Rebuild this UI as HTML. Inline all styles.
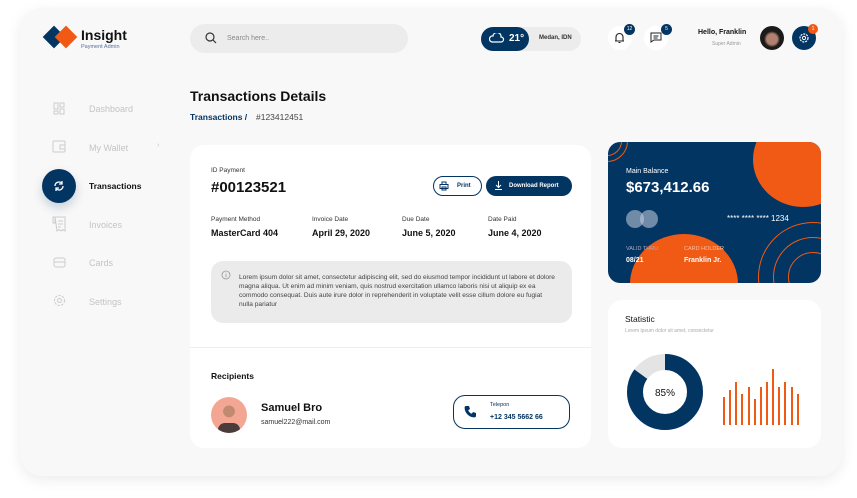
<!DOCTYPE html>
<html><head><meta charset="utf-8"><style>
*{margin:0;padding:0;box-sizing:border-box}
body{width:857px;height:498px;background:#fff;font-family:"Liberation Sans",sans-serif;position:relative;overflow:hidden;color:#111}
.a{position:absolute}
.frame{left:20px;top:8px;width:822px;height:468px;background:#f8f8f8;border-radius:22px;box-shadow:0 4px 14px rgba(0,0,0,.08)}
.navy{background:#033563}
.card{background:#fff;border-radius:14px}
.nav{font-size:9px;color:#c4c4c4}
.lbl{font-size:6.5px;color:#333}
.val{font-size:9px;font-weight:bold;color:#111}
</style></head><body>
<div class="a frame"></div>
<!-- logo -->
<div class="a navy" style="left:46px;top:29px;width:16px;height:16px;transform:rotate(45deg)"></div>
<div class="a" style="left:58px;top:29px;width:16px;height:16px;transform:rotate(45deg);background:#f05a14"></div>
<div class="a" style="left:81px;top:27px;font-size:14px;font-weight:bold">Insight</div>
<div class="a" style="left:81px;top:44px;font-size:5.5px;color:#5670a0">Payment Admin</div>
<!-- search -->
<div class="a" style="left:190px;top:24px;width:218px;height:29px;border-radius:15px;background:#ececec"></div>
<svg class="a" style="left:205px;top:32px" width="12" height="12" viewBox="0 0 12 12"><circle cx="5" cy="5" r="4" fill="none" stroke="#333" stroke-width="1.2"/><path d="M8 8l3 3" stroke="#333" stroke-width="1.2"/></svg>
<div class="a" style="left:227px;top:35px;font-size:7px;color:#888">Search here..</div>
<!-- weather -->
<div class="a" style="left:481px;top:27px;width:100px;height:24px;border-radius:12px;background:#ececec"></div>
<div class="a navy" style="left:481px;top:27px;width:48px;height:24px;border-radius:12px"></div>
<svg class="a" style="left:489px;top:33px" width="16" height="11" viewBox="0 0 16 11"><path d="M3 9a3 3 0 0 1 1-6a4 4 0 0 1 8 1a2.5 2.5 0 0 1 0 5z" fill="none" stroke="#fff" stroke-width="1.2"/></svg>
<div class="a" style="left:509px;top:33px;font-size:10px;font-weight:bold;color:#fff">21°</div>
<div class="a" style="left:539px;top:35px;font-size:6px;font-weight:bold;color:#333">Medan, IDN</div>
<!-- bell/chat -->
<div class="a" style="left:608px;top:26px;width:24px;height:24px;border-radius:12px;background:#fff"></div>
<svg class="a" style="left:613px;top:31px" width="13" height="13" viewBox="0 0 13 13"><path d="M3 10V6a3.5 3.5 0 0 1 7 0v4zM2 10h9M5.5 11.5h2" fill="none" stroke="#222" stroke-width="1.1"/></svg>
<div class="a navy" style="left:624px;top:24px;width:11px;height:11px;border-radius:6px;color:#fff;font-size:5px;text-align:center;line-height:11px">12</div>
<div class="a" style="left:644px;top:26px;width:24px;height:24px;border-radius:12px;background:#fff"></div>
<svg class="a" style="left:650px;top:32px" width="12" height="11" viewBox="0 0 12 11"><path d="M1 1h10v7H4l-3 2z M3.5 4h5M3.5 6h4" fill="none" stroke="#222" stroke-width="1"/></svg>
<div class="a navy" style="left:661px;top:24px;width:11px;height:11px;border-radius:6px;color:#fff;font-size:5px;text-align:center;line-height:11px">5</div>
<div class="a" style="left:698px;top:29px;font-size:7px;font-weight:bold">Hello, Franklin</div>
<div class="a" style="left:712px;top:41px;font-size:5px;color:#999">Super Admin</div>
<div class="a" style="left:760px;top:26px;width:24px;height:24px;border-radius:12px;background:radial-gradient(circle at 50% 55%,#b08070 0 30%,#1a1a1a 45%)"></div>
<div class="a navy" style="left:792px;top:26px;width:24px;height:24px;border-radius:12px"></div>
<svg class="a" style="left:798px;top:32px" width="12" height="12" viewBox="0 0 12 12"><circle cx="6" cy="6" r="4" fill="none" stroke="#fff" stroke-width="1.2" stroke-dasharray="2 1"/><circle cx="6" cy="6" r="1.6" fill="none" stroke="#fff"/></svg>
<div class="a" style="left:808px;top:24px;width:10px;height:10px;border-radius:5px;background:#f05a14;color:#fff;font-size:5px;text-align:center;line-height:10px">1</div>
<!-- sidebar -->
<svg class="a" style="left:53px;top:102px" width="13" height="13" viewBox="0 0 13 13" fill="none" stroke="#ccc"><rect x="1" y="1" width="4" height="6"/><rect x="1" y="9" width="4" height="3"/><rect x="7" y="1" width="4" height="4"/><rect x="7" y="7" width="4" height="5"/></svg>
<div class="a nav" style="left:89px;top:104px">Dashboard</div>
<svg class="a" style="left:52px;top:140px" width="15" height="13" viewBox="0 0 15 13" fill="none" stroke="#ccc"><rect x="1" y="1" width="12" height="11" rx="1"/><rect x="8" y="5" width="5" height="4"/></svg>
<div class="a nav" style="left:89px;top:143px">My Wallet</div>
<div class="a nav" style="left:157px;top:142px;font-size:7px">›</div>
<div class="a navy" style="left:42px;top:169px;width:34px;height:34px;border-radius:17px;box-shadow:0 5px 10px rgba(3,53,99,.2)"></div>
<svg class="a" style="left:53px;top:180px" width="12" height="12" viewBox="0 0 12 12" fill="none" stroke="#fff" stroke-width="1.3"><path d="M2 6a4 4 0 0 1 7-2.6M10 6a4 4 0 0 1-7 2.6M9 1v3H6M3 11V8h3"/></svg>
<div class="a" style="left:89px;top:181px;font-size:8.5px;font-weight:bold">Transactions</div>
<svg class="a" style="left:52px;top:216px" width="15" height="16" viewBox="0 0 15 16" fill="none" stroke="#ccc"><path d="M3 1h10v14l-2-1.5-2 1.5-2-1.5-2 1.5zM1 1h2v6H1zM6 5h5M6 8h5M6 11h3"/></svg>
<div class="a nav" style="left:89px;top:220px">Invoices</div>
<svg class="a" style="left:53px;top:257px" width="13" height="11" viewBox="0 0 13 11" fill="none" stroke="#ccc"><rect x="1" y="1" width="11" height="9" rx="2"/><path d="M1 5h11"/></svg>
<div class="a nav" style="left:89px;top:258px">Cards</div>
<svg class="a" style="left:53px;top:294px" width="13" height="13" viewBox="0 0 13 13" fill="none" stroke="#ccc"><circle cx="6.5" cy="6.5" r="5" stroke-dasharray="2.5 1.2"/><circle cx="6.5" cy="6.5" r="2"/></svg>
<div class="a nav" style="left:89px;top:297px">Settings</div>
<!-- title -->
<div class="a" style="left:190px;top:88px;font-size:14px;font-weight:bold">Transactions Details</div>
<div class="a" style="left:190px;top:112px;font-size:8.5px;font-weight:bold;color:#033563">Transactions /</div>
<div class="a" style="left:256px;top:112px;font-size:8.5px;color:#444">#123412451</div>
<!-- main card -->
<div class="a card" style="left:190px;top:145px;width:401px;height:303px"></div>
<div class="a" style="left:190px;top:347px;width:401px;height:1px;background:#eee"></div>
<div class="a lbl" style="left:211px;top:167px">ID Payment</div>
<div class="a" style="left:211px;top:179px;font-size:15px;font-weight:bold">#00123521</div>
<div class="a" style="left:433px;top:176px;width:49px;height:20px;border:1px solid #033563;border-radius:10px;font-size:6px;font-weight:bold;color:#033563;padding:6px 0 0 23px;line-height:7px">Print</div>
<svg class="a" style="left:439px;top:181px" width="10" height="10" viewBox="0 0 10 10" fill="none" stroke="#033563"><rect x="1" y="3.5" width="8" height="4"/><rect x="3" y="1" width="4" height="2.5"/><rect x="3" y="6" width="4" height="3"/></svg>
<div class="a navy" style="left:486px;top:176px;width:86px;height:20px;border-radius:10px;color:#fff;font-size:6px;font-weight:bold;padding:6.5px 0 0 23px;line-height:7px">Download Report</div>
<svg class="a" style="left:494px;top:181px" width="9" height="9" viewBox="0 0 9 9" fill="none" stroke="#fff"><path d="M4.5 0v6M2 4l2.5 2.5L7 4M1 8.5h7"/></svg>
<div class="a lbl" style="left:211px;top:216px">Payment Method</div><div class="a val" style="left:211px;top:228px">MasterCard 404</div>
<div class="a lbl" style="left:312px;top:216px">Invoice Date</div><div class="a val" style="left:312px;top:228px">April 29, 2020</div>
<div class="a lbl" style="left:402px;top:216px">Due Date</div><div class="a val" style="left:402px;top:228px">June 5, 2020</div>
<div class="a lbl" style="left:488px;top:216px">Date Paid</div><div class="a val" style="left:488px;top:228px">June 4, 2020</div>
<div class="a" style="left:211px;top:261px;width:361px;height:62px;border-radius:12px;background:#ebebeb"></div>
<svg class="a" style="left:221px;top:270px" width="10" height="10" viewBox="0 0 10 10" fill="none" stroke="#999" stroke-width=".8"><circle cx="5" cy="5" r="4"/><path d="M5 4.2v3M5 2.6v.6"/></svg>
<div class="a" style="left:239px;top:273px;width:318px;font-size:6.6px;line-height:9px;color:#444">Lorem ipsum dolor sit amet, consectetur adipiscing elit, sed do eiusmod tempor incididunt ut labore et dolore magna aliqua. Ut enim ad minim veniam, quis nostrud exercitation ullamco laboris nisi ut aliquip ex ea commodo consequat. Duis aute irure dolor in reprehenderit in voluptate velit esse cillum dolore eu fugiat nulla pariatur</div>
<div class="a" style="left:211px;top:371px;font-size:8.5px;font-weight:bold">Recipients</div>
<div class="a" style="left:211px;top:397px;width:36px;height:36px;border-radius:18px;background:radial-gradient(circle at 50% 40%,#c08a70 0 20%,#f3a793 22%);overflow:hidden"><div style="position:absolute;left:7px;top:26px;width:22px;height:14px;border-radius:8px;background:#4b3c3c"></div></div>
<div class="a" style="left:261px;top:402px;font-size:11px;font-weight:bold">Samuel Bro</div>
<div class="a" style="left:261px;top:419px;font-size:7px;color:#333">samuel222@mail.com</div>
<div class="a" style="left:453px;top:395px;width:117px;height:34px;border:1px solid #033563;border-radius:12px"></div>
<svg class="a" style="left:464px;top:405px" width="13" height="13" viewBox="0 0 13 13"><path d="M2 1l3 0 1 3-1.8 1.2a7 7 0 0 0 3.6 3.6L9 7l3 1v3c0 1-1 1.5-2 1.4A10 10 0 0 1 .6 3C.5 2 1 1 2 1z" fill="#033563"/></svg>
<div class="a" style="left:490px;top:402px;font-size:5.5px;color:#033563">Telepon</div>
<div class="a" style="left:490px;top:414px;font-size:7px;font-weight:bold;color:#033563">+12 345 5662 66</div>
<!-- balance card -->
<div class="a navy" style="left:608px;top:142px;width:213px;height:141px;border-radius:12px;overflow:hidden">
 <div class="a" style="left:145px;top:-30px;width:100px;height:95px;border-radius:50%;background:#f05a14"></div>
 <div class="a" style="left:22px;top:92px;width:108px;height:100px;border-radius:50%;background:#f05a14"></div>
 <div class="a" style="left:-22px;top:-22px;width:42px;height:42px;border-radius:50%;border:1px solid #f05a14"></div>
 <div class="a" style="left:-16px;top:-16px;width:30px;height:30px;border-radius:50%;border:1px solid #f05a14"></div>
 <div class="a" style="left:150px;top:80px;width:110px;height:110px;border-radius:50%;border:1px solid #f05a14"></div>
 <div class="a" style="left:165px;top:95px;width:80px;height:80px;border-radius:50%;border:1px solid #f05a14"></div>
 <div class="a" style="left:180px;top:110px;width:50px;height:50px;border-radius:50%;border:1px solid #f05a14"></div>
 <div class="a" style="left:18px;top:26px;font-size:7px;color:#fff">Main Balance</div>
 <div class="a" style="left:18px;top:37px;font-size:15px;font-weight:bold;color:#fff">$673,412.66</div>
 <div class="a" style="left:18px;top:68px;width:18px;height:18px;border-radius:9px;background:rgba(200,210,225,.55)"></div>
 <div class="a" style="left:32px;top:68px;width:18px;height:18px;border-radius:9px;background:rgba(200,210,225,.55)"></div>
 <div class="a" style="left:119px;top:72px;font-size:8px;color:#fff">**** **** **** 1234</div>
 <div class="a" style="left:18px;top:104px;font-size:5.5px;color:#aab">VALID THRU</div>
 <div class="a" style="left:18px;top:115px;font-size:7px;font-weight:bold;color:#fff">08/21</div>
 <div class="a" style="left:76px;top:104px;font-size:5.5px;color:#f8c0a0">CARD HOLDER</div>
 <div class="a" style="left:76px;top:115px;font-size:7px;font-weight:bold;color:#fff">Franklin Jr.</div>
</div>
<!-- statistic -->
<div class="a card" style="left:608px;top:300px;width:213px;height:148px"></div>
<div class="a" style="left:625px;top:314px;font-size:8.5px">Statistic</div>
<div class="a" style="left:625px;top:328px;font-size:5px;color:#aaa">Lorem ipsum dolor sit amet, consectetur</div>
<svg class="a" style="left:620px;top:347px" width="90" height="90" viewBox="0 0 90 90">
<circle cx="45" cy="45" r="30" fill="none" stroke="#e4e4e4" stroke-width="16"/>
<circle cx="45" cy="45" r="30" fill="none" stroke="#033563" stroke-width="16" stroke-dasharray="160.2 188.5" transform="rotate(-90 45 45)"/>
<text x="45" y="49" font-size="10" text-anchor="middle" font-family="Liberation Sans" fill="#111">85%</text></svg>
<svg class="a" style="left:720px;top:365px" width="85" height="60" viewBox="0 0 85 60" fill="#f05a14">
<rect x="3" y="32" width="2" height="28"/><rect x="9" y="25" width="2" height="35"/><rect x="15" y="17" width="2" height="43"/><rect x="21" y="29" width="2" height="31"/><rect x="28" y="22" width="2" height="38"/><rect x="34" y="34" width="2" height="26"/><rect x="40" y="22" width="2" height="38"/><rect x="46" y="17" width="2" height="43"/><rect x="52" y="4" width="2" height="56"/><rect x="58" y="22" width="2" height="38"/><rect x="64" y="17" width="2" height="43"/><rect x="71" y="22" width="2" height="38"/><rect x="77" y="29" width="2" height="31"/></svg>
</body></html>
